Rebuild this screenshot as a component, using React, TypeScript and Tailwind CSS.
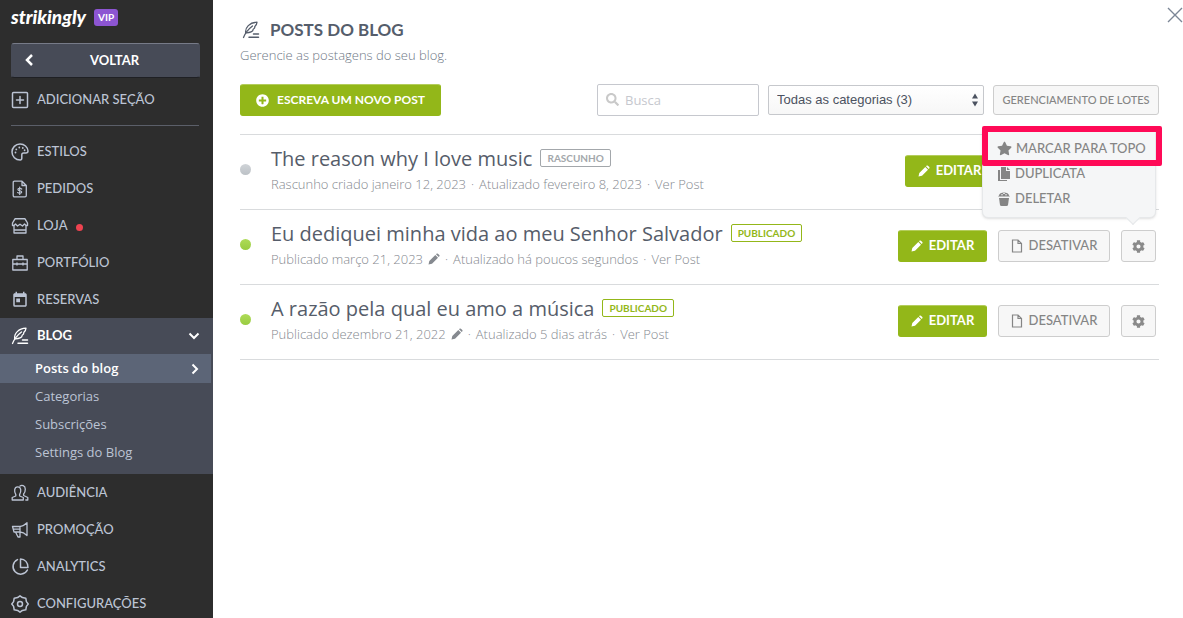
import { useState, type ReactNode } from "react";
import { FaCog, FaPencilAlt, FaPlusCircle, FaSearch, FaStar } from "react-icons/fa";
import { MdToday } from "react-icons/md";

type Post = {
  title: string;
  status: "draft" | "published";
  date: string;
  updated: string;
};

const posts: Post[] = [
  {
    title: "The reason why I love music",
    status: "draft",
    date: "Rascunho criado janeiro 12, 2023",
    updated: "Atualizado fevereiro 8, 2023",
  },
  {
    title: "Eu dediquei minha vida ao meu Senhor Salvador",
    status: "published",
    date: "Publicado março 21, 2023",
    updated: "Atualizado há poucos segundos",
  },
  {
    title: "A razão pela qual eu amo a música",
    status: "published",
    date: "Publicado dezembro 21, 2022",
    updated: "Atualizado 5 dias atrás",
  },
];

function Icon({ children, className = "size-[18px]" }: { children: ReactNode; className?: string }) {
  return (
    <svg
      viewBox="0 0 18 18"
      className={className}
      fill="none"
      stroke="currentColor"
      strokeWidth="1.5"
      strokeLinecap="round"
      strokeLinejoin="round"
      aria-hidden="true"
    >
      {children}
    </svg>
  );
}

function PaletteIcon() {
  return (
    <Icon>
      <path d="M9 1C4.500 1 1 4.600 1 9C1 13.500 4.600 17 9.200 17C10.500 17 10.800 16 10.800 15V11.800Q10.800 10 12.600 10H14.800C16.200 10 17 9.300 17 8C16.600 4 13.400 1 9 1Z" strokeWidth="1.500" />
      <path d="M4.500 9.500V9.600M5.300 6.300V6.400M8.300 4.500V4.600M11.800 4.900V5M13.600 7.200V7.300" strokeWidth="1.800" />
    </Icon>
  );
}

function FeatherIcon() {
  return (
    <Icon>
      <path d="M1.500 16.500C3.500 11.500 6.500 8 10.500 5" strokeWidth="1.300" />
      <path d="M3.700 11.800C3 6.500 7.500 1.500 15 1.200C14.800 3.500 14 4.500 12.800 5.500C13 6.500 12.500 7.500 11.200 8.200C11.200 10.500 8 12 3.700 11.800Z" strokeWidth="1.300" />
      <path d="M11.500 13H16.500M7 16.300H16.500" />
    </Icon>
  );
}

function OrdersIcon() {
  return (
    <Icon>
      <path d="M3.500 1.200H11L15.300 5.500V15.500Q15.300 16.800 14 16.800H3.500Q2.200 16.800 2.200 15.500V2.500Q2.200 1.200 3.500 1.200ZM11 1.200V5.500H15.300" strokeWidth="1.300" />
      <path d="M10.700 9C9.500 7.900 6.900 8 6.900 9.500C6.900 11.200 10.700 10.300 10.700 12C10.700 13.600 7.900 13.600 6.600 12.600M8.700 7V14.500" strokeWidth="1.200" />
    </Icon>
  );
}

function StoreIcon() {
  return (
    <Icon>
      <path d="M4 1.800H14L16.500 6V8.500H15L13.500 7L11.500 9L9 7.200L6.500 9L4.500 7L3 8.500H1.500V6Z" strokeWidth="1.400" />
      <path d="M3 9V16H15V9M3 13H15" strokeWidth="1.300" />
    </Icon>
  );
}

function PortfolioIcon() {
  return (
    <Icon>
      <path d="M1.800 5.500H16.200V16H1.800ZM6 5.500V2H12V5.500M2 10H16M6 9V11M12 9V11" strokeWidth="1.300" />
    </Icon>
  );
}

function AudienceIcon() {
  return (
    <Icon>
      <path d="M4.800 10.500C3 8 3 2.800 6.700 2.800S10.400 8 8.600 10.500V12L12.300 13.500V16H1.200V13.500L4.800 12Z" strokeWidth="1.300" />
      <path d="M9 2C10.500 .800 14.300 1.200 14.300 5.200C14.300 7.500 13.500 9 12.600 10V11.500L16.800 13.500V16H14.800" strokeWidth="1.300" />
    </Icon>
  );
}

function PromotionIcon() {
  return (
    <Icon>
      <path d="M1.500 5.500H9C11.500 5.500 13.500 4 16 1.800V14.500C13.500 12 11.500 11 9 11H3L1.500 5.500ZM9 5.500V16H7L4.500 11M2.200 8.200H9" strokeWidth="1.300" />
    </Icon>
  );
}

function AnalyticsIcon() {
  return (
    <Icon>
      <path d="M6.500 1.600A7.600 7.600 0 1 0 16.400 12M9.500 1V9.500H17C17 4.500 14 1 9.500 1Z" strokeWidth="1.500" />
    </Icon>
  );
}

function SettingsIcon() {
  return (
    <Icon>
      <path
        d="M9 .8L11.400 2.600L14.800 3.200L15.400 6.600L17.200 9L15.400 11.400L14.800 14.800L11.400 15.400L9 17.200L6.600 15.400L3.200 14.800L2.600 11.400L.8 9L2.600 6.600L3.200 3.200L6.600 2.600Z"
        strokeWidth="1.500"
      />
      <circle cx="9" cy="9" r="2.500" />
    </Icon>
  );
}

function PageIcon() {
  return (
    <svg viewBox="0 0 12 14" className="h-[14px] w-3" fill="none" stroke="currentColor" aria-hidden="true">
      <path d="M1.500 1H7L10.500 4.500V13H1.500ZM7 1V4.500H10.500" strokeWidth="1.200" />
    </svg>
  );
}

function CopyIcon() {
  return (
    <svg viewBox="0 0 14 16" className="h-4 w-[14px]" fill="currentColor" aria-hidden="true">
      <path d="M4 1H9V5H13V13H4Z" />
      <path d="M10 1L13 4H10Z" />
      <path d="M1 4H3V14H10V15H1Z" />
    </svg>
  );
}

function TrashIcon() {
  return (
    <svg viewBox="0 0 14 16" className="h-4 w-[14px]" fill="currentColor" aria-hidden="true">
      <path d="M2 4.500C2 .500 12 .500 12 4.500L13 5.500H1Z" />
      <path d="M2 7H12L11 14Q10.800 15 9.500 15H4.500Q3.200 15 3 14Z" />
      <path d="M4 3.800H6M8 3.800H10M6 2.500H8" stroke="#f5f6f7" strokeWidth=".8" />
    </svg>
  );
}

// solid pencil, tip at the bottom left
function PencilIcon() {
  return (
    <svg viewBox="0 0 12 12" className="size-3" fill="currentColor" aria-hidden="true">
      <path d="M.500 11.500L1.300 8L7.300 2L10 4.700L4 10.700ZM8 1.300L8.800 .6Q9.300 .2 9.900 .7L11.300 2.100Q11.800 2.700 11.400 3.200L10.700 4Z" />
    </svg>
  );
}

function NavItem({ icon, label, dot = false }: { icon: ReactNode; label: string; dot?: boolean }) {
  return (
    <a href="#" className="flex h-[37px] items-center gap-2 pl-[11px] text-[13px] hover:text-white">
      <span className="flex w-[18px] justify-center">{icon}</span>
      {label}
      {dot && <span className="mt-1 size-[7px] rounded-full bg-[#ee4350]" />}
    </a>
  );
}

const blogPages = ["Categorias", "Subscrições", "Settings do Blog"];

function Sidebar() {
  return (
    <aside className="flex min-h-screen w-[213px] shrink-0 flex-col bg-[#2d2d2d] font-['Lato',sans-serif] font-medium text-[#bcc4d4]">
      <div className="flex h-[34px] items-center gap-2 pl-[11px]">
        <span className="text-[19px] leading-6 font-black text-white italic">strikingly</span>
        <span className="rounded-[3px] bg-[#8d55d2] px-1 text-[10px] leading-[17px] font-bold text-white">VIP</span>
      </div>

      <button className="relative mt-[9px] mr-[13px] ml-[11px] h-[35px] rounded-[3px] border border-t-[#777b88] border-r-[#474b57] border-b-[#1f2024] border-l-[#474b57] bg-[#474b57] pl-[18px] text-[13px] font-bold text-white">
        <svg viewBox="0 0 10 14" className="absolute top-[9px] left-3 h-[14px] w-[10px]" fill="none" stroke="currentColor" strokeWidth="2.500" aria-hidden="true">
          <path d="M8 2L3 7L8 12" />
        </svg>
        VOLTAR
      </button>

      <div className="mr-[14px] ml-[11px] border-b border-[#5b5f69] pt-1 pb-[7px]">
        <a href="#" className="flex h-9 items-center gap-2 text-[13px] hover:text-white">
          <Icon>
            <rect x="1.500" y="1.500" width="15" height="15" rx="1" />
            <path d="M9 5.500V12.500M5.500 9H12.500" />
          </Icon>
          ADICIONAR SEÇÃO
        </a>
      </div>

      <nav className="pt-[7px]">
        <NavItem icon={<PaletteIcon />} label="ESTILOS" />
        <NavItem icon={<OrdersIcon />} label="PEDIDOS" />
        <NavItem icon={<StoreIcon />} label="LOJA" dot />
        <NavItem icon={<PortfolioIcon />} label="PORTFÓLIO" />
        <NavItem icon={<MdToday className="size-[18px]" />} label="RESERVAS" />

        <div className="bg-[#474b57] pb-[7px]">
          <a href="#" className="flex h-9 items-center gap-2 pr-[13px] pl-[11px] text-[13px] font-bold text-white">
            <FeatherIcon />
            BLOG
            <svg viewBox="0 0 12 10" className="ml-auto h-[10px] w-3" fill="none" stroke="currentColor" strokeWidth="2" aria-hidden="true">
              <path d="M1.500 2.500L6 7L10.500 2.500" />
            </svg>
          </a>
          <div className="font-['Open_Sans',sans-serif] text-[13px] font-normal">
            <a href="#" className="mr-0.5 flex h-[29px] items-center bg-[#5c6577] pr-3 pl-[35px] font-semibold text-white">
              Posts do blog
              <svg viewBox="0 0 8 12" className="ml-auto h-3 w-2" fill="none" stroke="currentColor" strokeWidth="2" aria-hidden="true">
                <path d="M1.500 1.500L6 6L1.500 10.500" />
              </svg>
            </a>
            {blogPages.map((page) => (
              <a key={page} href="#" className="flex h-7 items-center pl-[35px] hover:text-white">
                {page}
              </a>
            ))}
          </div>
        </div>

        <NavItem icon={<AudienceIcon />} label="AUDIÊNCIA" />
        <NavItem icon={<PromotionIcon />} label="PROMOÇÃO" />
        <NavItem icon={<AnalyticsIcon />} label="ANALYTICS" />
        <NavItem icon={<SettingsIcon />} label="CONFIGURAÇÕES" />
      </nav>
    </aside>
  );
}

function EditButton() {
  return (
    <button className="flex h-8 w-[89px] shrink-0 items-center justify-center gap-1.5 rounded-[3px] border border-[#93b719] border-t-[#b4cd5c] bg-[#93b719] text-[13px] font-bold text-white">
      <PencilIcon />
      EDITAR
    </button>
  );
}

function PostMenu() {
  return (
    <div className="absolute right-0 bottom-full z-10 mb-3 w-[174px] rounded-b-md border border-[#e6e8ea] bg-[#f5f6f7] pt-[5px] pb-1.5 pl-3.5 text-[13px] font-medium text-[#858585] shadow-sm">
      <button className="flex h-[25px] items-center gap-1">
        <FaStar className="size-[15px]" />
        MARCAR PARA TOPO
      </button>
      <button className="flex h-[25px] items-center gap-1">
        <CopyIcon />
        DUPLICATA
      </button>
      <button className="flex h-[25px] items-center gap-1">
        <TrashIcon />
        DELETAR
      </button>
      <span className="absolute right-[17px] -bottom-[6px] size-[10px] rotate-45 border-r border-b border-[#e6e8ea] bg-[#f5f6f7]" />
      <span className="pointer-events-none absolute -top-[5px] -right-[7px] -left-[1px] h-10 rounded-[2px] border-6 border-[#ff0a57]" />
    </div>
  );
}

function PostRow({ post, menuOpen, onMenu }: { post: Post; menuOpen: boolean; onMenu: () => void }) {
  const live = post.status === "published";

  return (
    <li className="flex h-[75px] items-center border-b border-[#d9dbdd] pr-[3px] pb-0.5">
      <span
        className={
          live
            ? "mb-1 size-[11px] shrink-0 rounded-full bg-linear-to-b from-[#aedb57] to-[#99cc41]"
            : "mb-1 size-[11px] shrink-0 rounded-full bg-linear-to-b from-[#d0d4d8] to-[#bcc1c6]"
        }
      />
      <div className="min-w-0 flex-1 pb-0.5 pl-5 font-['Open_Sans',sans-serif]">
        <div className="flex items-center gap-2">
          <h2 className="text-[20px] leading-[27px] text-[#565d6a]">{post.title}</h2>
          <span
            className={
              live
                ? "rounded-[2px] border border-[#93b719] px-1.5 font-['Lato',sans-serif] text-[10px] leading-4 font-bold text-[#93b719]"
                : "rounded-[2px] border border-[#a3a7ab] px-1.5 font-['Lato',sans-serif] text-[10px] leading-4 font-bold text-[#a3a7ab]"
            }
          >
            {live ? "PUBLICADO" : "RASCUNHO"}
          </span>
        </div>
        <p className="flex items-center gap-[5px] text-[13px] leading-6 font-light text-[#85898f]">
          {post.date}
          {live && <PencilIcon />}
          <span>·</span>
          {post.updated}
          <span>·</span>
          <a href="#" className="hover:underline">
            Ver Post
          </a>
        </p>
      </div>

      {live ? (
        <div className="flex gap-[11px]">
          <EditButton />
          <button className="flex h-8 w-28 items-center justify-center gap-1.5 rounded-[3px] border border-[#cdcdcd] bg-[#f7f7f7] text-[13px] font-medium text-[#858585]">
            <PageIcon />
            DESATIVAR
          </button>
          <div className="relative">
            <button
              onClick={onMenu}
              aria-label="Opções"
              className="flex h-8 w-[35px] items-center justify-center rounded-[3px] border border-[#cdcdcd] bg-[#f7f7f7] text-[#8a8a8a]"
            >
              <FaCog className="size-[13px]" />
            </button>
            {menuOpen && <PostMenu />}
          </div>
        </div>
      ) : (
        <div className="flex w-[251px]">
          <EditButton />
        </div>
      )}
    </li>
  );
}

export default function App() {
  const [openMenu, setOpenMenu] = useState<number | null>(1);
  const [search, setSearch] = useState("");

  return (
    <div className="flex min-h-screen bg-white font-['Lato',sans-serif]">
      <Sidebar />

      <main className="relative min-w-0 flex-1 pt-[18px] pr-6 pl-[27px]">
        <button aria-label="Fechar" className="absolute top-[7px] right-0 text-[#7b8696]">
          <svg viewBox="0 0 16 16" className="size-4" fill="none" stroke="currentColor" strokeWidth="1.400" aria-hidden="true">
            <path d="M1 1L15 15M15 1L1 15" />
          </svg>
        </button>

        <header>
          <h1 className="flex items-center gap-2.5 pl-0.5 text-[17px] leading-6 font-bold text-[#555d6b]">
            <FeatherIcon />
            POSTS DO BLOG
          </h1>
          <p className="pt-1 font-['Open_Sans',sans-serif] text-[13px] leading-[18px] font-light text-[#6f7886]">
            Gerencie as postagens do seu blog.
          </p>
        </header>

        <div className="mt-5 flex items-center gap-[9px]">
          <button className="mr-auto flex h-8 w-[201px] items-center justify-center gap-2 rounded-[3px] border border-[#93b719] border-t-[#b4cd5c] bg-[#93b719] text-[12px] font-bold text-white">
            <FaPlusCircle className="size-[13px]" />
            ESCREVA UM NOVO POST
          </button>
          <div className="relative">
            <FaSearch className="absolute top-[9px] left-[9px] size-[13px] text-[#c9c9c9]" />
            <input
              type="text"
              aria-label="Busca"
              value={search}
              onChange={(e) => setSearch(e.target.value)}
              placeholder="Busca"
              className="h-8 w-[162px] rounded-[2px] border border-[#c6c8ce] pl-[27px] font-['Open_Sans',sans-serif] text-[13px] text-[#4b5260] placeholder:text-[#c6c8ce]"
            />
          </div>
          <div className="relative">
            <select
              aria-label="Categorias"
              className="block h-[30px] w-[216px] appearance-none rounded-[2px] border border-[#c6c8cc] bg-linear-to-b from-white to-[#f7f7f7] pl-2 font-['Liberation_Sans',sans-serif] text-[13px] text-[#4b5260]"
            >
              <option>Todas as categorias (3)</option>
            </select>
            <svg viewBox="0 0 8 14" className="pointer-events-none absolute top-2 right-[5px] h-[14px] w-2" fill="#4b5260" aria-hidden="true">
              <path d="M1 5.500L4 .500L7 5.500ZM1 8.500H7L4 13.500Z" />
            </svg>
          </div>
          <button className="h-[30px] w-[166px] rounded-[3px] border border-[#cdcdcd] bg-[#f7f7f7] text-[11px] font-medium text-[#858585]">
            GERENCIAMENTO DE LOTES
          </button>
        </div>

        <ul className="mt-[18px] border-t border-[#d9dbdd]">
          {posts.map((post, i) => (
            <PostRow
              key={post.title}
              post={post}
              menuOpen={openMenu === i}
              onMenu={() => setOpenMenu(openMenu === i ? null : i)}
            />
          ))}
        </ul>
      </main>
    </div>
  );
}
